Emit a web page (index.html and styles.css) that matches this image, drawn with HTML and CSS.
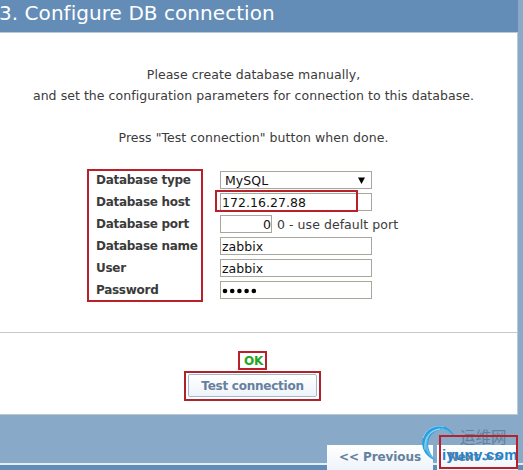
FILE: index.html
```html
<!DOCTYPE html>
<html lang="en">
<head>
<meta charset="utf-8">
<title>Configure DB connection</title>
<link rel="stylesheet" href="styles.css">
</head>
<body>
<main class="wizard">
  <header class="heading"><h1>3. Configure DB connection</h1></header>
  <section class="panel">
    <div class="intro">
      <p>Please create database manually,</p>
      <p>and set the configuration parameters for connection to this database.</p>
      <p class="hint">Press "Test connection" button when done.</p>
    </div>
    <div class="form">
      <div class="labels">
        <div>Database type</div><div>Database host</div><div>Database port</div><div>Database name</div><div>User</div><div>Password</div>
        <span class="mark mark-labels"></span>
      </div>
      <div class="fields">
        <div class="row"><div class="field select"><span>MySQL</span><svg class="arrow" viewBox="0 0 7 7"><path d="M0 0.5H7L3.5 7Z"/></svg></div></div>
        <div class="row"><div class="field">172.16.27.88</div><span class="mark mark-host"></span></div>
        <div class="row"><div class="field port">0</div><span class="note">0 - use default port</span></div>
        <div class="row"><div class="field">zabbix</div></div>
        <div class="row"><div class="field">zabbix</div></div>
        <div class="row"><div class="field"><svg class="dots" viewBox="0 0 36 6"><circle cx="3" cy="3" r="2.3"/><circle cx="10.2" cy="3" r="2.3"/><circle cx="17.4" cy="3" r="2.3"/><circle cx="24.6" cy="3" r="2.3"/><circle cx="31.8" cy="3" r="2.3"/></svg></div></div>
      </div>
    </div>
    <div class="result">
      <div class="ok">OK</div>
      <div class="test-wrap"><div class="button test">Test connection</div></div>
    </div>
  </section>
  <footer class="footer">
    <div class="button nav prev">&lt;&lt; Previous</div>
    <div class="button nav next">Next &gt;&gt;</div>
    <div class="watermark">
      <svg class="swirl" viewBox="0 0 37 42">
        <path d="M35 14C29 2 17 -1 8 7C-2 17 1 33 17 38C8 31 5 18 12 11C19 4 28 6 35 14Z" fill="#269fdf"/>
        <path d="M33 12C25 4 14 6 9 13C5 21 8 32 17 38C3 31 2 17 9 10C17 3 27 4 33 12Z" fill="#62bce9"/>
        <path d="M3 15C6 6 15 1 24 4M5 27C3 17 10 7 20 6" fill="none" stroke="#b6ddf2" stroke-width=".7"/>
      </svg>
      <span class="cn">运维网</span>
      <span class="domain">iyunv.com</span>
    </div>
    <span class="mark mark-next"></span>
  </footer>
</main>
</body>
</html>
```
FILE: styles.css
```css
* { box-sizing: border-box; }
body {
  margin: 0;
  height: 470px;
  overflow: hidden;
  background: #88a9c8;
  color: #3b3b3b;
  font: 12.5px/21px Verdana, "DejaVu Sans", sans-serif;
  letter-spacing: .05px;
}
h1, p { margin: 0; }
.wizard { height: 470px; display: flex; flex-direction: column; }
.heading { width: 518px; height: 32px; background: #638db6; }
h1 {
  margin-left: -1px;
  color: #fff;
  font-size: 20px;
  font-weight: 400;
  line-height: 27px;
  white-space: nowrap;
}
.panel {
  width: 518px;
  height: 383px;
  background: #fff;
  border: 1px solid #b9c9d6;
  border-left: 0;
  padding-top: 31px;
}
.intro { width: 507px; text-align: center; white-space: nowrap; }
.hint { margin-top: 21px; }
.form { display: flex; margin: 21px 0 0 96px; }
.labels {
  position: relative;
  width: 124px;
  font-size: 12px;
  font-weight: 700;
  letter-spacing: -.28px;
  line-height: 23px;
  white-space: nowrap;
}
.labels div { height: 22px; }
.row { position: relative; display: flex; align-items: center; height: 22px; }
.field {
  width: 152px;
  height: 18px;
  border: 1px solid #a9a79d;
  background: #fff;
  color: #111;
  line-height: 17px;
  padding-left: 1px;
  white-space: nowrap;
}
.select { display: flex; justify-content: space-between; align-items: center; padding: 0 6px 0 4px; }
.arrow { width: 7px; height: 7px; }
.port { width: 52px; text-align: right; }
.note { margin-left: 5px; white-space: nowrap; }
.dots { display: block; width: 36px; height: 6px; margin-top: 6px; }
.mark { position: absolute; border: 2px solid #b9202a; }
.mark-labels { left: -9px; top: 0; width: 116px; height: 133px; }
.mark-host { left: -5px; top: -1px; width: 143px; height: 22px; }
.result {
  margin-top: 31px;
  border-top: 1px solid #c8c8c8;
  padding: 18px 0 0 184px;
}
.ok {
  width: 29px;
  height: 19px;
  margin-left: 54px;
  padding-left: 2px;
  border: 2px solid #b9202a;
  color: #24a624;
  font-size: 12px;
  font-weight: 700;
  line-height: 17px;
  letter-spacing: -.2px;
  text-align: center;
}
.test-wrap { width: 137px; height: 30px; margin-top: 1px; border: 2px solid #ad222b; padding: 1px 2px 2px; }
.button {
  color: #66809d;
  font-size: 12px;
  font-weight: 700;
  letter-spacing: -.25px;
  text-align: center;
  white-space: nowrap;
  background: linear-gradient(#fff, #eef4fa);
}
.test { width: 129px; height: 23px; border: 1px solid #a2b8cd; border-radius: 2px; line-height: 22px; }
.footer {
  position: relative;
  height: 55px;
  display: flex;
  justify-content: flex-end;
  gap: 4px;
  padding: 30px 5px 0 0;
  background: linear-gradient(#88a9c8 48px, #e4eef6 48px, #e4eef6 50px, #638db6 50px);
}
.nav { height: 25px; line-height: 24px; letter-spacing: -.1px; }
.prev { width: 106px; }
.next { width: 81px; padding-right: 4px; }
.watermark { position: absolute; left: 420px; top: 8px; width: 103px; height: 42px; }
.swirl { position: absolute; left: 0; top: 0; width: 37px; height: 42px; }
.cn {
  position: absolute;
  left: 40px;
  top: 3px;
  color: #64809b;
  font: 15.5px/20px "Noto Sans CJK SC", sans-serif;
  letter-spacing: 0;
  white-space: nowrap;
}
.domain {
  position: absolute;
  left: 22px;
  top: 21px;
  color: #2383cb;
  font: 700 15px/22px "Liberation Sans", sans-serif;
  letter-spacing: .3px;
  white-space: nowrap;
}
.mark-next { left: 439px; top: 20px; width: 79px; height: 34px; }
```
